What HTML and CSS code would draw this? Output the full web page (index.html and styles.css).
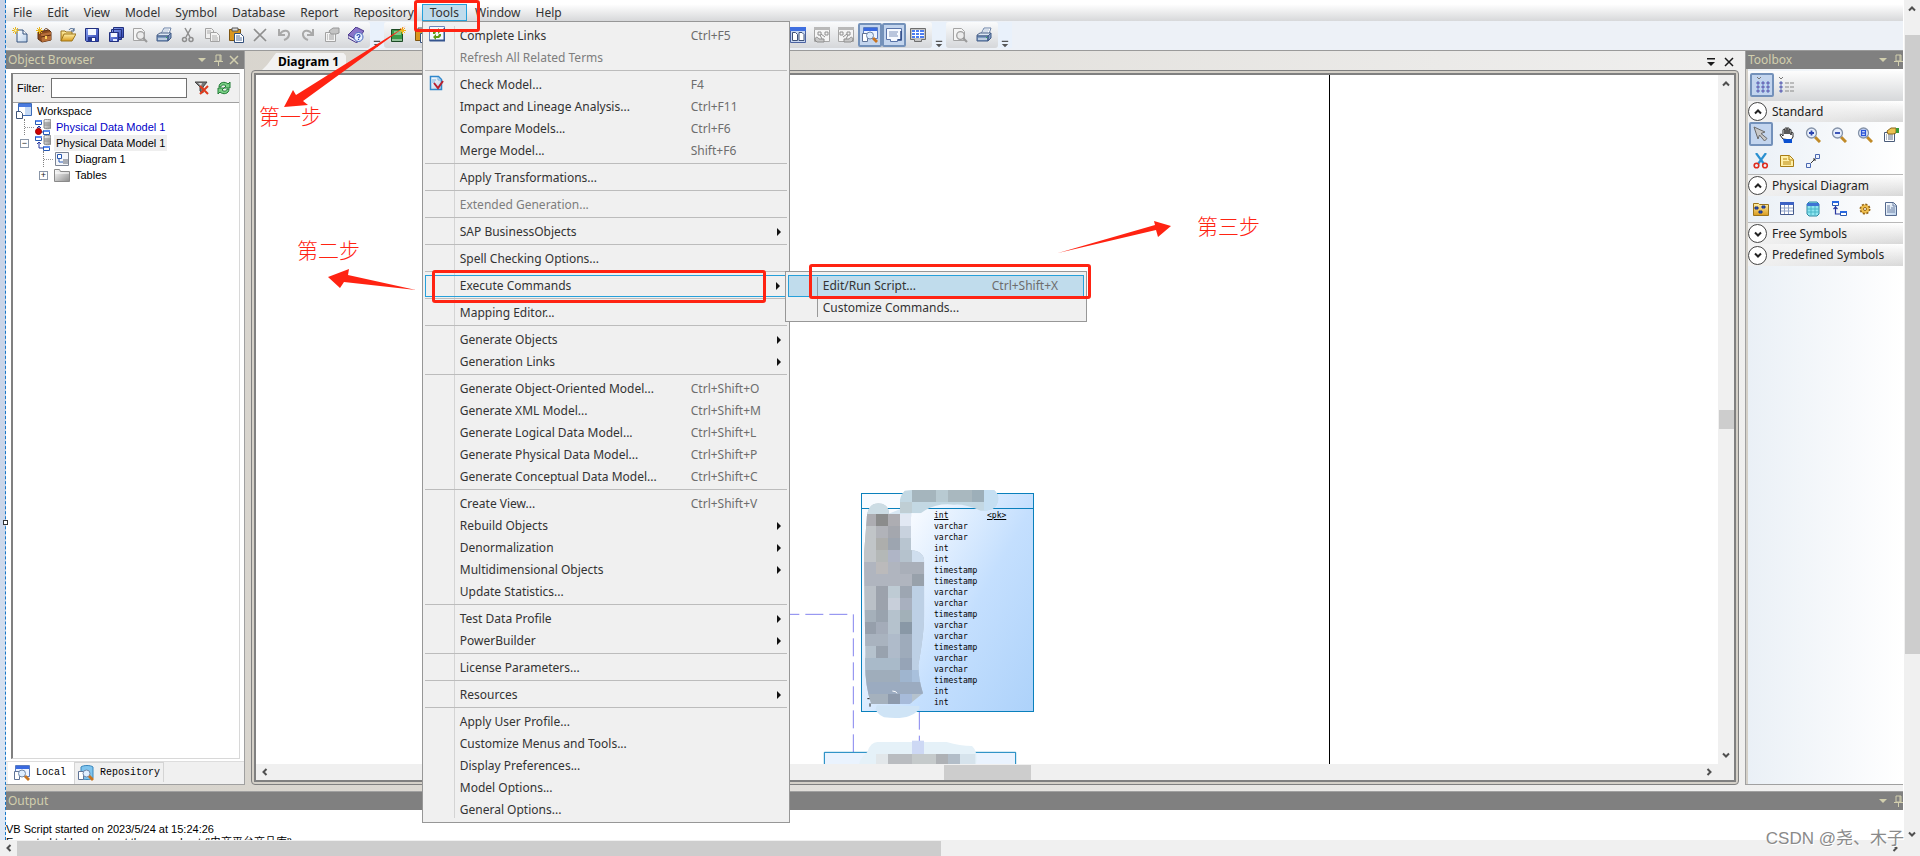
FILE: index.html
```html
<!DOCTYPE html>
<html lang="en">
<head>
<meta charset="utf-8">
<title>Physical Data Model 1 - Diagram 1</title>
<link rel="stylesheet" href="styles.css">
</head>
<body>
<svg class="defs" aria-hidden="true">
  <defs>
    <linearGradient id="gGold" x1="0" y1="0" x2="0" y2="1"><stop offset="0" stop-color="#fff0a8"/><stop offset="1" stop-color="#d99a1c"/></linearGradient>
    <linearGradient id="gBlue" x1="0" y1="0" x2="1" y2="1"><stop offset="0" stop-color="#8ea6f2"/><stop offset="1" stop-color="#2a3fae"/></linearGradient>
    <linearGradient id="gPaper" x1="0" y1="0" x2="1" y2="1"><stop offset="0" stop-color="#ffffff"/><stop offset="1" stop-color="#b9d0ea"/></linearGradient>
    <linearGradient id="gGrey" x1="0" y1="0" x2="1" y2="1"><stop offset="0" stop-color="#ffffff"/><stop offset="1" stop-color="#8d8d8d"/></linearGradient>
  </defs>
  <symbol id="i-new" viewBox="0 0 16 16"><path d="M5 3h6l4 4v8H5z" fill="url(#gPaper)" stroke="#33507c"/><path d="M11 3v4h4" fill="#fff" stroke="#33507c"/><path d="M3.500 0v7M0 3.500h7M1 1l5 5M6 1L1 6" stroke="#e8b51a"/><path d="M2.500 3.500h2" stroke="#fff8b0" stroke-width="2"/></symbol>
  <symbol id="i-case" viewBox="0 0 16 16"><path d="M2 5l11-2 2 2v8l-9 2-4-3z" fill="#8a4a20" stroke="#5d2e10"/><path d="M5 7l10-2v8l-9 2z" fill="#b8703a"/><path d="M5 10l10-2" stroke="#5d2e10"/><path d="M8 4c0-3 4-3 4-1" fill="none" stroke="#5d2e10"/><path d="M9 9h2v3H9z" fill="#ffd25a"/><path d="M3.500 0v7M0 3.500h7M1 1l5 5M6 1L1 6" stroke="#e8b51a"/></symbol>
  <symbol id="i-open" viewBox="0 0 16 16"><path d="M1 14V4h4l1 1h6v3" fill="url(#gGold)" stroke="#9c741a"/><path d="M1 14l3-7h12l-4 7z" fill="url(#gGold)" stroke="#9c741a"/><path d="M9 3c1-2 4-2 5 0m0-2v3h-3" fill="none" stroke="#3c5a86"/></symbol>
  <symbol id="i-save" viewBox="0 0 16 16"><path d="M1.500 1.500h13v13h-12l-1-1z" fill="url(#gBlue)" stroke="#22307e"/><path d="M4 2h8v6H4z" fill="#f4f8ff"/><path d="M4 10h8v5H4z" fill="#283a90"/><path d="M8 11h3v3H8z" fill="#fff"/></symbol>
  <symbol id="i-saveall" viewBox="0 0 16 16"><path d="M5.500.500h10v10h-10zM3.500 2.500h10v10h-10z" fill="url(#gBlue)" stroke="#22307e"/><path d="M1.500 5.500h9v9h-9z" fill="url(#gBlue)" stroke="#22307e"/><path d="M3 6h6v4H3z" fill="#f4f8ff"/><path d="M5 12h4v2H5z" fill="#dfe8ff"/></symbol>
  <symbol id="i-preview" viewBox="0 0 16 16"><path d="M1.500 1.500h8l3 3v9h-11z" fill="#f5f5f5" stroke="#a4a4a4"/><circle cx="8.500" cy="8.500" r="3.800" fill="#ececec" stroke="#a0a0a0" stroke-width="1.300"/><path d="M11 11l4 4" stroke="#9a9a9a" stroke-width="2.200"/></symbol>
  <symbol id="i-print" viewBox="0 0 16 16"><path d="M5 7l3-6h7l-2 6z" fill="#fff" stroke="#6d83a8"/><path d="M8 3h5M7 5h5" stroke="#a9bbd4"/><path d="M1 8l3-2h11l-3 3H1z" fill="#dde7f3" stroke="#51678c"/><path d="M1 9h11v5H1zM12 9l3-3v5l-3 3z" fill="#7f9cc2" stroke="#405a86"/><path d="M2 12h9" stroke="#fff"/><path d="M10 10h1v1h-1z" fill="#36b04a"/></symbol>
  <symbol id="i-cut" viewBox="0 0 16 16"><path d="M5 1l5 9M11 1L6 10" stroke="currentColor" stroke-width="1.500"/><circle cx="4.500" cy="12.500" r="2" fill="none" stroke="currentColor" stroke-width="1.500"/><circle cx="11" cy="12.500" r="2" fill="none" stroke="currentColor" stroke-width="1.500"/></symbol>
  <symbol id="i-copy" viewBox="0 0 16 16"><path d="M1.500 1.500h6l2 2v8h-8z" fill="#f0f0f0" stroke="#a2a2a2"/><path d="M6.500 5.500h6l3 3v6h-9z" fill="#f4f4f4" stroke="#a2a2a2"/><path d="M3 4h4M3 6h3M8 9h5M8 11h6M8 13h6" stroke="#adadad"/></symbol>
  <symbol id="i-paste" viewBox="0 0 16 16"><path d="M1.500 2.500h11v11h-11z" fill="#d9961e" stroke="#7e5510"/><path d="M4 1h6v3H4z" fill="#dfdfdf" stroke="#555"/><path d="M6.500 6.500h6l3 3v6h-9z" fill="#fff" stroke="#33507c"/><path d="M8 9h4M8 11h6M8 13h6" stroke="#53709e"/></symbol>
  <symbol id="i-x" viewBox="0 0 16 16"><path d="M2 2l12 12M14 2L2 14" stroke="currentColor" stroke-width="1.700"/></symbol>
  <symbol id="i-undo" viewBox="0 0 16 16"><path d="M3 2v6h6" fill="none" stroke="#a9a9a9" stroke-width="2"/><path d="M4 7c3-5 10-4 9 1-.5 3-2 4-5 5" fill="none" stroke="#a9a9a9" stroke-width="2"/></symbol>
  <symbol id="i-props" viewBox="0 0 16 16"><path d="M1.500 5.500h10v9h-10z" fill="#f4f4f4" stroke="#a2a2a2"/><path d="M3 8h1m1 0h5M3 10h1m1 0h5M3 12h1m1 0h5" stroke="#9d9d9d"/><path d="M5 4l4-3h6v5l-3 1-5 0z" fill="#c4c4c4" stroke="#989898"/></symbol>
  <symbol id="i-propscolor" viewBox="0 0 16 16"><path d="M1.500 5.500h10v9h-10z" fill="#fff" stroke="#4a5c7a"/><path d="M3 8h1m1 0h5M3 10h1m1 0h5M3 12h1m1 0h5" stroke="#62728c"/><path d="M4 4l4-3h5v5l-3 1-5 0z" fill="#ecc252" stroke="#8c6a1c"/><path d="M13 1h3v5h-3z" fill="#3b9a3a"/></symbol>
  <symbol id="i-book" viewBox="0 0 16 16"><path d="M0 8l8-8 8 4-7 9z" fill="#8a74c8" stroke="#4b3a8c"/><path d="M0 8v3l9 5v-3z" fill="#e6e2f6" stroke="#4b3a8c"/><circle cx="10.500" cy="10" r="4.500" fill="#e8f0ff" stroke="#4a6ac0"/><path d="M9 9c0-2 3-2 3 0 0 1-1.500 1-1.500 2.200M10.500 12v1" fill="none" stroke="#2a4cb0" stroke-width="1.200"/></symbol>
  <symbol id="i-green" viewBox="0 0 16 16"><path d="M1.500 2.500h11v12h-11z" fill="#3a9a48" stroke="#1c4a24"/><path d="M4 4h7v4H4z" fill="#7fc689"/><path d="M2 13h10" stroke="#e8e8e8"/><path d="M12.500 0v7M9 3.500h7M10 1l5 5M15 1l-5 5" stroke="#efb81a"/></symbol>
  <symbol id="i-win" viewBox="0 0 16 16"><path d="M.500.500h15v15H.500z" fill="#c9d8f2" stroke="#4a62a0"/><path d="M0 0h16v4H0z" fill="#3f6fe0"/><path d="M2.500 5.500h3l2 2v6h-5zM9 5.500h3l2 2v6H9z" fill="#fff" stroke="#3d5078"/></symbol>
  <symbol id="i-net" viewBox="0 0 16 16"><path d="M.500.500h15v14H.500z" fill="#f5f5f5" stroke="#a6a6a6"/><path d="M0 0h16v3H0z" fill="#b9b9b9"/><path d="M4 5h3v3H4zM11 5h3v3h-3zM7 7l4 3M6 8l2 4" fill="none" stroke="#8e8e8e"/><path d="M1 13c0-4 3-3 4-1h5v3H3z" fill="#c8c8c8" stroke="#8e8e8e"/></symbol>
  <symbol id="i-find" viewBox="0 0 16 16"><path d="M1.500.500h14v11h-14z" fill="#eef4ff" stroke="#5a7cc0"/><path d="M2 1h13v3H2z" fill="#3a6ae0"/><path d="M.500 6.500h5v8h-5z" fill="#fff" stroke="#5f7396"/><circle cx="8" cy="8.500" r="3.500" fill="#dfeeff" stroke="#6f86a8"/><path d="M11 11l4 4" stroke="#c87420" stroke-width="2.800"/></symbol>
  <symbol id="i-repo" viewBox="0 0 16 16"><path d="M3 2c2-2 10-2 12 0v11c-2 2-10 2-12 0z" fill="#7fc4ee" stroke="#3a86bc"/><path d="M.500 6.500h5v8h-5z" fill="#fff" stroke="#5f7396"/><circle cx="8.500" cy="8.500" r="3.500" fill="#dfeeff" stroke="#6f86a8"/><path d="M11 11l4 4" stroke="#c87420" stroke-width="2.800"/></symbol>
  <symbol id="i-note" viewBox="0 0 16 16"><path d="M.500 1.500h15v11h-4v2h-7v-2h-4z" fill="#f6faff" stroke="#5a74a8"/><path d="M3 5h9M3 7h8M3 9h9" stroke="#7c92ba"/><path d="M12 13h3V4" fill="none" stroke="#2d4a86" stroke-width="1.500"/></symbol>
  <symbol id="i-grid" viewBox="0 0 16 16"><path d="M.500 1.500h15v11h-4v2h-7v-2h-4z" fill="#c4c4c4" stroke="#6e6e6e"/><path d="M2 3h12v8H2z" fill="#4d7df0"/><path d="M2 5.500h12M2 8.500h12M5.500 3v8M9.500 3v8" stroke="#fff"/></symbol>
  <symbol id="i-links" viewBox="0 0 16 16"><path d="M.500.500h15v14H.500z" fill="#f4f8ff" stroke="#6a86b8"/><path d="M.500 14.500h15V2" fill="none" stroke="#35558f" stroke-width="2"/><path d="M4 8V6l2-2h3V2l3 3-3 3V6H7L6 8zM12 8v2l-2 2H7v2l-3-3 3-3v2h2l1-2z" fill="#5f9a14"/></symbol>
  <symbol id="i-check" viewBox="0 0 16 16"><path d="M1.500 1.500h8l3 3v10h-11z" fill="url(#gPaper)" stroke="#2f87cc" stroke-width="1.500"/><path d="M9 2v3h3M3 5h4M3 7h3" fill="none" stroke="#79b4e0"/><path d="M5 8l4 5 5-7" fill="none" stroke="#b8202e" stroke-width="2"/></symbol>
  <symbol id="i-filter" viewBox="0 0 16 16"><path d="M1 2h12L9 7v6l-3-2V7z" fill="#787878" stroke="#444"/><path d="M4 3h4l-1 3" fill="#ddd"/><path d="M6 6l8 8M14 6l-8 8" stroke="#e03a1c" stroke-width="2"/></symbol>
  <symbol id="i-refresh" viewBox="0 0 16 16"><path d="M3 7c0-5 6-6 9-3l2-2v6H8l2-2c-2-2-5-1-5 1zM13 9c0 5-6 6-9 3l-2 2V8h6l-2 2c2 2 5 1 5-1z" fill="#7ad086" stroke="#1f7a34"/></symbol>
  <symbol id="i-work" viewBox="0 0 16 16"><path d="M2.500.500h13v12h-13z" fill="#fff" stroke="#3a6ab8"/><path d="M3 1h12v3H3z" fill="#4a7ae0"/><path d="M9 4h6v8H9z" fill="#c5daf5"/><path d="M.500 8.500h4l2 2v5h-6z" fill="#fff" stroke="#3f5478"/></symbol>
  <symbol id="i-pdm" viewBox="0 0 16 16"><path d="M9 1c1-1 6-1 7 0v8c-1 1-6 1-7 0z" fill="url(#gGrey)" stroke="#888"/><path d="M9 4h7M9 6h7" stroke="#888"/><path d="M.500 1.500h6v4h-6zM8.500 11.500h6v4h-6z" fill="#fff" stroke="#2858b0"/><path d="M1 2h6M9 12h6" stroke="#5a8af0" stroke-width="2"/><path d="M4 13V7M2 9l2-2 2 2M4 13h4" fill="none" stroke="#2838a0"/></symbol>
  <symbol id="i-pdmred" viewBox="0 0 16 16"><use href="#i-pdm"/><circle cx="3.500" cy="12.500" r="3" fill="#d00000" stroke="#900"/></symbol>
  <symbol id="i-diag" viewBox="0 0 16 16"><path d="M1.500 1.500h13v13h-13z" fill="#f4f6fa" stroke="#7c8494"/><path d="M3.500 3.500h4v4h-4zM5 8v3h4" fill="#fff" stroke="#2858b0"/><path d="M9 8h5v5H9z" fill="#a8acb4"/></symbol>
  <symbol id="i-folder" viewBox="0 0 16 16"><path d="M.500 14.500v-12h5l1 2h9v10z" fill="url(#gGrey)" stroke="#8a8a8a"/><path d="M1 6h14" stroke="#fff"/></symbol>
  <symbol id="i-thumbs" viewBox="0 0 16 16"><path d="M3 0l2 2 2-2" fill="none" stroke="#777"/><path d="M3 5h2v2H3zM8 5h2v2H8zM13 5h2v2h-2zM3 9h2v2H3zM8 9h2v2H8zM13 9h2v2h-2zM3 13h2v2H3zM8 13h2v2H8zM13 13h2v2h-2z" fill="#e070a0" stroke="#5070c0"/></symbol>
  <symbol id="i-list" viewBox="0 0 16 16"><path d="M0 0l2 2 2-2" fill="none" stroke="#777"/><path d="M1 5h2v2H1zM1 9h2v2H1zM1 13h2v2H1z" fill="#e070a0" stroke="#5070c0"/><path d="M6 6h4m1 0h4M6 10h4m1 0h4M6 14h4m1 0h4" stroke="#888"/></symbol>
  <symbol id="i-arrow" viewBox="0 0 16 16"><path d="M1 1l11 5-4 1.500 6 5-2.500 2.500-5-6L5 13z" fill="#c8c8c8" stroke="#6a6a6a"/></symbol>
  <symbol id="i-hand" viewBox="0 0 16 16"><path d="M4 12L1 8c0-1 1.500-1.500 3 1V3c0-1 2-1 2 0v4V1.500c0-1 2-1 2 0V7 1.500c0-1 2-1 2 0V7 3c0-1 2-1 2 0v5-2c0-1 2-1 2 0v4l-2 3z" fill="#fff" stroke="#222"/><path d="M4 12h9v4H5z" fill="#0a50d0"/></symbol>
  <symbol id="i-zin" viewBox="0 0 16 16"><path d="M10 10l5 5" stroke="#c08a28" stroke-width="3"/><circle cx="6.500" cy="6" r="5" fill="#e6eefc" stroke="#8492a8" stroke-width="1.300"/><path d="M4 6h5M6.500 3.500v5" stroke="#2a44b0" stroke-width="1.800"/></symbol>
  <symbol id="i-zout" viewBox="0 0 16 16"><path d="M10 10l5 5" stroke="#c08a28" stroke-width="3"/><circle cx="6.500" cy="6" r="5" fill="#e6eefc" stroke="#8492a8" stroke-width="1.300"/><path d="M4 6h5" stroke="#2a44b0" stroke-width="1.800"/></symbol>
  <symbol id="i-zfit" viewBox="0 0 16 16"><path d="M10 10l5 5" stroke="#c08a28" stroke-width="3"/><circle cx="6.500" cy="6" r="5" fill="#e6eefc" stroke="#8492a8" stroke-width="1.300"/><path d="M4.500 3.500h4v5h-4zM4 6h5" fill="#fff" stroke="#2a54d8" stroke-width="1.300"/></symbol>
  <symbol id="i-scis" viewBox="0 0 16 16"><path d="M3 0l8 11M13 0L5 11" stroke="#2a90d0" stroke-width="2.200"/><circle cx="3.500" cy="12.500" r="2.300" fill="none" stroke="#e02c1c" stroke-width="1.600"/><circle cx="12" cy="12.500" r="2.300" fill="none" stroke="#e02c1c" stroke-width="1.600"/></symbol>
  <symbol id="i-memo" viewBox="0 0 16 16"><path d="M1.500 2.500h9l4 4v7h-13z" fill="#fff0a8" stroke="#a87c14"/><path d="M10 2.500V7h4M4 6h4M4 9h8M4 11h8" fill="none" stroke="#b8860b"/></symbol>
  <symbol id="i-link" viewBox="0 0 16 16"><path d="M1.500 10.500h4v4h-4zM10.500 1.500h4v4h-4z" fill="#eef4ff" stroke="#4a68b0"/><path d="M6 10l4-4M8 6h2v2" fill="none" stroke="#333"/></symbol>
  <symbol id="i-pkg" viewBox="0 0 16 16"><path d="M.500 14.500v-12h5l1 1h9v11z" fill="url(#gGold)" stroke="#9c741a"/><path d="M2 6h3v2H2zM9 5h3v2H9zM6 10h3v2H6z" fill="#3058c8" stroke="#183080"/></symbol>
  <symbol id="i-table" viewBox="0 0 16 16"><path d="M1.500 1.500h13v12h-13z" fill="#fff" stroke="#43598c"/><path d="M1 1h14v3H1z" fill="#3d62c4"/><path d="M2 7h12M2 10h12M5.500 4v9M9.500 4v9" stroke="#8fa2c8"/></symbol>
  <symbol id="i-view" viewBox="0 0 16 16"><path d="M2 3l2-2h8l2 2v10l-2 2H4l-2-2z" fill="#8fe6f0" stroke="#2c86a0"/><path d="M2 2h12v3H2z" fill="#3d74d4"/><path d="M2 8h12M2 11h12M6 5v9M10 5v9" stroke="#48b6c8"/></symbol>
  <symbol id="i-ref" viewBox="0 0 16 16"><path d="M1.500.500h6v4h-6zM9.500 10.500h6v4h-6z" fill="#fff" stroke="#2858b0"/><path d="M1 1h7M9 11h7" stroke="#2868e0" stroke-width="2"/><path d="M4.500 5v8H9M2.500 8l2-2 2 2" fill="none" stroke="#2838a0" stroke-width="1.200"/></symbol>
  <symbol id="i-gear" viewBox="0 0 16 16"><circle cx="8" cy="8" r="4.500" fill="#e0a830" stroke="#946414" stroke-width="2" stroke-dasharray="2 1.500"/><circle cx="8" cy="8" r="3.800" fill="#f0c050"/><circle cx="8" cy="8" r="1.500" fill="#fff" stroke="#946414"/></symbol>
  <symbol id="i-file" viewBox="0 0 16 16"><path d="M2.500 1.500h8l3 3v10h-11z" fill="url(#gPaper)" stroke="#54698e"/><path d="M10 2v3h3M4 5h3M4 7h3M8 7h4M4 9h8M4 11h8" fill="none" stroke="#6e82a6"/></symbol>
  <symbol id="i-pin" viewBox="0 0 10 12"><path d="M3 1h5v6H3zM1 7.500h9M5.500 8v4M7 1v6" fill="none" stroke="currentColor"/></symbol>
  <symbol id="i-close" viewBox="0 0 10 10"><path d="M1 1l8 8M9 1L1 9" stroke="currentColor" stroke-width="1.500"/></symbol>
  <symbol id="i-drop" viewBox="0 0 10 6"><path d="M1 1h8L5 5z" fill="currentColor"/></symbol>
  <symbol id="i-menu" viewBox="0 0 10 10"><path d="M1 1h8v1.500H1zM1 5h8L5 9z" fill="currentColor"/></symbol>
  <symbol id="i-up" viewBox="0 0 8 8"><path d="M1 5.500L4 2.500l3 3" fill="none" stroke="currentColor" stroke-width="2"/></symbol>
  <symbol id="i-down" viewBox="0 0 8 8"><path d="M1 2.500l3 3 3-3" fill="none" stroke="currentColor" stroke-width="2"/></symbol>
  <symbol id="i-left" viewBox="0 0 8 8"><path d="M5.500 1L2.500 4l3 3" fill="none" stroke="currentColor" stroke-width="2"/></symbol>
  <symbol id="i-right" viewBox="0 0 8 8"><path d="M2.500 1l3 3-3 3" fill="none" stroke="currentColor" stroke-width="2"/></symbol>
</svg>

<div class="page">
  <div class="edge"><span class="handle"></span></div>

  <div class="app">
    <nav class="menubar">
      <button>File</button><button>Edit</button><button>View</button><button>Model</button><button>Symbol</button><button>Database</button><button>Report</button><button>Repository</button>
      <div class="menu-host">
        <button class="open">Tools</button>
        <ul class="menu">
          <li><svg class="ico"><use href="#i-links"/></svg><button>Complete Links</button><kbd>Ctrl+F5</kbd></li>
          <li class="off"><button disabled>Refresh All Related Terms</button></li>
          <li class="sep"></li>
          <li><svg class="ico"><use href="#i-check"/></svg><button>Check Model...</button><kbd>F4</kbd></li>
          <li><button>Impact and Lineage Analysis...</button><kbd>Ctrl+F11</kbd></li>
          <li><button>Compare Models...</button><kbd>Ctrl+F6</kbd></li>
          <li><button>Merge Model...</button><kbd>Shift+F6</kbd></li>
          <li class="sep"></li>
          <li><button>Apply Transformations...</button></li>
          <li class="sep"></li>
          <li class="off"><button disabled>Extended Generation...</button></li>
          <li class="sep"></li>
          <li class="more"><button>SAP BusinessObjects</button></li>
          <li class="sep"></li>
          <li><button>Spell Checking Options...</button></li>
          <li class="sep"></li>
          <li class="more current"><button>Execute Commands</button>
            <ul class="menu submenu">
              <li class="hot"><button>Edit/Run Script...</button><kbd>Ctrl+Shift+X</kbd></li>
              <li><button>Customize Commands...</button></li>
            </ul>
          </li>
          <li class="sep"></li>
          <li><button>Mapping Editor...</button></li>
          <li class="sep"></li>
          <li class="more"><button>Generate Objects</button></li>
          <li class="more"><button>Generation Links</button></li>
          <li class="sep"></li>
          <li><button>Generate Object-Oriented Model...</button><kbd>Ctrl+Shift+O</kbd></li>
          <li><button>Generate XML Model...</button><kbd>Ctrl+Shift+M</kbd></li>
          <li><button>Generate Logical Data Model...</button><kbd>Ctrl+Shift+L</kbd></li>
          <li><button>Generate Physical Data Model...</button><kbd>Ctrl+Shift+P</kbd></li>
          <li><button>Generate Conceptual Data Model...</button><kbd>Ctrl+Shift+C</kbd></li>
          <li class="sep"></li>
          <li><button>Create View...</button><kbd>Ctrl+Shift+V</kbd></li>
          <li class="more"><button>Rebuild Objects</button></li>
          <li class="more"><button>Denormalization</button></li>
          <li class="more"><button>Multidimensional Objects</button></li>
          <li><button>Update Statistics...</button></li>
          <li class="sep"></li>
          <li class="more"><button>Test Data Profile</button></li>
          <li class="more"><button>PowerBuilder</button></li>
          <li class="sep"></li>
          <li><button>License Parameters...</button></li>
          <li class="sep"></li>
          <li class="more"><button>Resources</button></li>
          <li class="sep"></li>
          <li><button>Apply User Profile...</button></li>
          <li><button>Customize Menus and Tools...</button></li>
          <li><button>Display Preferences...</button></li>
          <li><button>Model Options...</button></li>
          <li><button>General Options...</button></li>
        </ul>
      </div>
      <button>Window</button><button>Help</button>
    </nav>

    <div class="toolbars">
      <div class="bar">
        <button aria-label="New"><svg class="ico"><use href="#i-new"/></svg></button>
        <button aria-label="New project"><svg class="ico"><use href="#i-case"/></svg></button>
        <button aria-label="Open"><svg class="ico"><use href="#i-open"/></svg></button>
        <button aria-label="Save"><svg class="ico"><use href="#i-save"/></svg></button>
        <button aria-label="Save all"><svg class="ico"><use href="#i-saveall"/></svg></button>
        <button aria-label="Preview"><svg class="ico"><use href="#i-preview"/></svg></button>
        <button aria-label="Print"><svg class="ico"><use href="#i-print"/></svg></button>
        <button aria-label="Cut"><svg class="ico grey"><use href="#i-cut"/></svg></button>
        <button aria-label="Copy"><svg class="ico"><use href="#i-copy"/></svg></button>
        <button aria-label="Paste"><svg class="ico"><use href="#i-paste"/></svg></button>
        <button aria-label="Delete"><svg class="ico grey"><use href="#i-x"/></svg></button>
        <button aria-label="Undo"><svg class="ico"><use href="#i-undo"/></svg></button>
        <button aria-label="Redo"><svg class="ico flip"><use href="#i-undo"/></svg></button>
        <button aria-label="Properties"><svg class="ico"><use href="#i-props"/></svg></button>
        <button aria-label="Help"><svg class="ico"><use href="#i-book"/></svg></button>
      </div>
      <button class="overflow" aria-label="More"><svg><use href="#i-menu"/></svg></button>
      <div class="bar wide">
        <div class="tools">
          <button aria-label="New model"><svg class="ico"><use href="#i-green"/></svg></button>
          <button aria-label="Paste as"><svg class="ico"><use href="#i-paste"/></svg></button>
        </div>
        <div class="tools">
          <button aria-label="Tile"><svg class="ico"><use href="#i-win"/></svg></button>
          <button aria-label="Show in"><svg class="ico"><use href="#i-net"/></svg></button>
          <button aria-label="Show out"><svg class="ico flip"><use href="#i-net"/></svg></button>
          <button class="on" aria-label="Browser"><svg class="ico"><use href="#i-find"/></svg></button>
          <button class="on" aria-label="Output"><svg class="ico"><use href="#i-note"/></svg></button>
          <button aria-label="Result list"><svg class="ico"><use href="#i-grid"/></svg></button>
        </div>
      </div>
      <button class="overflow" aria-label="More"><svg><use href="#i-menu"/></svg></button>
      <div class="bar">
        <button aria-label="Preview"><svg class="ico"><use href="#i-preview"/></svg></button>
        <button aria-label="Print"><svg class="ico"><use href="#i-print"/></svg></button>
      </div>
      <button class="overflow" aria-label="More"><svg><use href="#i-menu"/></svg></button>
    </div>

    <main class="work">
      <aside class="browser">
        <header class="caption"><h2>Object Browser</h2><svg class="drop"><use href="#i-drop"/></svg><svg class="pin"><use href="#i-pin"/></svg><svg class="close"><use href="#i-close"/></svg></header>
        <div class="browser-body">
          <div class="sunken">
            <div class="filter">
              <label for="filter">Filter:</label><input id="filter" type="text">
              <button aria-label="Clear filter"><svg class="ico"><use href="#i-filter"/></svg></button>
              <button aria-label="Refresh"><svg class="ico"><use href="#i-refresh"/></svg></button>
            </div>
            <ul class="tree">
              <li><svg class="ico"><use href="#i-work"/></svg><span>Workspace</span></li>
              <li class="l1"><i class="stem"></i><svg class="ico"><use href="#i-pdmred"/></svg><span class="blue">Physical Data Model 1</span></li>
              <li class="l1"><i class="box">−</i><svg class="ico"><use href="#i-pdm"/></svg><span class="sel">Physical Data Model 1</span></li>
              <li class="l2"><i class="stem"></i><svg class="ico"><use href="#i-diag"/></svg><span>Diagram 1</span></li>
              <li class="l2"><i class="box">+</i><svg class="ico"><use href="#i-folder"/></svg><span>Tables</span></li>
            </ul>
          </div>
        </div>
        <div class="tabs"><button class="sel"><svg class="ico"><use href="#i-find"/></svg>Local</button><button><svg class="ico"><use href="#i-repo"/></svg>Repository</button></div>
      </aside>

      <section class="document">
        <div class="doc-tabs"><button class="doc-tab">Diagram 1</button><svg class="dm"><use href="#i-menu"/></svg><svg class="dx"><use href="#i-close"/></svg></div>
        <div class="frame">
          <div class="sheet">
            <div class="canvas">
              <i class="page-break"></i>
              <svg class="art" viewBox="0 0 840 882">
                <g fill="none" stroke="#8484ee" stroke-width="3"><path d="M30 433h190" stroke-dasharray="54 18" stroke-dashoffset="26"/><path d="M220 433v413M418 725v90" stroke-dasharray="54 18"/></g>
                <path d="M133 882v-35h574v35" fill="#eaf3fe" stroke="#0a80bc" stroke-width="3"/>
              </svg>
              <div class="entity">
                <div class="entity-name"></div>
                <table>
                  <tr><td></td><td><u>int</u></td><td><u>&lt;pk&gt;</u></td></tr>
                  <tr><td></td><td>varchar</td><td></td></tr>
                  <tr><td></td><td>varchar</td><td></td></tr>
                  <tr><td></td><td>int</td><td></td></tr>
                  <tr><td></td><td>int</td><td></td></tr>
                  <tr><td></td><td>timestamp</td><td></td></tr>
                  <tr><td></td><td>timestamp</td><td></td></tr>
                  <tr><td></td><td>varchar</td><td></td></tr>
                  <tr><td></td><td>varchar</td><td></td></tr>
                  <tr><td></td><td>timestamp</td><td></td></tr>
                  <tr><td></td><td>varchar</td><td></td></tr>
                  <tr><td></td><td>varchar</td><td></td></tr>
                  <tr><td></td><td>timestamp</td><td></td></tr>
                  <tr><td></td><td>varchar</td><td></td></tr>
                  <tr><td></td><td>varchar</td><td></td></tr>
                  <tr><td></td><td>timestamp</td><td></td></tr>
                  <tr><td></td><td>int</td><td></td></tr>
                  <tr><td></td><td>int</td><td></td></tr>
                </table>
              </div>
              <svg class="art" viewBox="0 0 840 882">
                <defs>
                  <clipPath id="blobA"><path d="M260 150q0-48 35-50 32 2 32 32h66v108q40 4 40 36v150q0 60-18 160 0 40 14 84l-40 32H274q-22-60-18-150l-4-300z"/></clipPath>
                  <clipPath id="blobB"><path d="M374 62q16-2 22-2h246q20 18 10 40-8 24-50 22-50-22-80-18-60-6-100 26h-62q-8-46 14-68z"/></clipPath>
                </defs>
                <path d="M290 706q-10 20 22 36 50 6 76-4 34-14 30-30z" fill="#cfe4f6"/>
                <path d="M324 132l50-20 20 8v20h-70z" fill="#d8e8f4"/>
                <path d="M262 686h8M270 700v10" stroke="#222" stroke-width="3"/>
                <g clip-path="url(#blobA)">
                  <rect x="250" y="98" width="186" height="612" fill="#b5c2cd"/>
                  <rect x="250" y="98" width="80" height="34" fill="#ccdce4"/>
                  <g fill="#adadb2"><path d="M252 132h36v36h-36zM324 132h36v36h-36z"/></g>
                  <path d="M288 132h36v36h-36z" fill="#8b8c8c"/>
                  <path d="M360 132h72v36h-72z" fill="#e1e8f3"/>
                  <path d="M252 168h36v108h-36z" fill="#c1c5c8"/><path d="M288 168h36v36h-36z" fill="#b1b3b9"/><path d="M324 168h36v36h-36z" fill="#a4a7ae"/><path d="M360 168h36v36h-36z" fill="#c8d2de"/>
                  <path d="M288 204h36v36h-36z" fill="#adaeac"/><path d="M324 204h36v36h-36z" fill="#9da5b0"/><path d="M360 204h36v36h-36z" fill="#b8c5d0"/>
                  <path d="M288 240h36v36h-36z" fill="#b4b8b7"/><path d="M324 240h36v36h-36z" fill="#afb5c6"/><path d="M396 240h36v36h-36z" fill="#cfdeee"/>
                  <path d="M252 276h180v72H252z" fill="#b0b5bf"/><path d="M288 276h36v36h-36z" fill="#bbbabb"/><path d="M360 276h72v36h-72z" fill="#a9afb9"/><path d="M396 312h36v36h-36z" fill="#98a1ab"/>
                  <path d="M252 348h36v72h-36z" fill="#bac0c7"/><path d="M288 348h36v72h-36z" fill="#9ca2ac"/><path d="M324 348h36v36h-36z" fill="#becbd4"/><path d="M324 384h36v36h-36z" fill="#c8cfda"/><path d="M360 348h36v36h-36z" fill="#9da6b2"/><path d="M360 384h36v36h-36z" fill="#a8b0bf"/><path d="M396 348h36v252h-36z" fill="#bdd0e5"/>
                  <path d="M252 420h36v36h-36z" fill="#a5b0ba"/><path d="M288 420h36v36h-36z" fill="#99a3ae"/><path d="M360 420h36v36h-36z" fill="#a2b0b8"/>
                  <path d="M252 456h36v36h-36z" fill="#969fab"/><path d="M288 456h36v36h-36z" fill="#a4acb9"/><path d="M360 456h36v36h-36z" fill="#8998a6"/>
                  <path d="M252 492h72v36h-72z" fill="#a9b3bf"/><path d="M360 492h36v72h-36z" fill="#9eabbb"/><path d="M288 528h36v36h-36z" fill="#98a2ae"/><path d="M324 492h36v72h-36z" fill="#afbbca"/>
                  <path d="M252 564h108v36H252z" fill="#a9bac9"/><path d="M360 564h36v36h-36z" fill="#96a4b7"/>
                  <path d="M252 600h108v36H252z" fill="#9fadbb"/><path d="M360 600h36v36h-36z" fill="#9fb5cf"/><path d="M396 600h36v36h-36z" fill="#a8c0dc"/>
                  <path d="M252 636h180v36H252z" fill="#9babc0"/>
                  <path d="M252 672h72v36h-72z" fill="#a5b1bd"/><path d="M324 672h36v36h-36z" fill="#8d9aac"/><path d="M360 672h36v36h-36z" fill="#a7bbda"/>
                </g>
                <path d="M337 663l10 2 4 5" fill="none" stroke="#fff" stroke-width="3"/>
                <g clip-path="url(#blobB)">
                  <rect x="360" y="58" width="296" height="76" fill="#c3d8e3"/>
                  <path d="M396 60h72v36h-72z" fill="#a5b5bd"/><path d="M468 60h36v36h-36z" fill="#b8cad2"/><path d="M504 60h72v36h-72z" fill="#a9b8bf"/><path d="M576 60h36v36h-36z" fill="#9dafb9"/><path d="M612 60h46v66h-46z" fill="#c5dff2"/><path d="M360 96h36v36h-36z" fill="#bfced4"/>
                </g>
                <path d="M262 846q10-30 30-30h208q40 12 76 12 20 20 12 56l-80 4-20 8-250-8q-4-16 24-42z" fill="#e5f1f8"/>
                <path d="M396 812h36v40h-36z" fill="#cdd8f4"/>
                <path d="M324 852h72v30h-72z" fill="#b9bcc0"/><path d="M396 852h72v30h-72z" fill="#c5cacb"/><path d="M468 852h36v30h-36z" fill="#aeb1b5"/><path d="M504 852h36v30h-36z" fill="#b2bdc8"/><path d="M288 852h36v30h-36z" fill="#e2e7ea"/><path d="M540 852h46v30h-46z" fill="#d6e3ec"/>
              </svg>
            </div>
            <div class="vbar inner"><svg><use href="#i-up"/></svg><i class="thumb"></i><svg><use href="#i-down"/></svg></div>
            <div class="hbar inner"><svg><use href="#i-left"/></svg><i class="thumb"></i><svg><use href="#i-right"/></svg></div>
          </div>
        </div>
      </section>

      <aside class="toolbox">
        <header class="caption"><h2>Toolbox</h2><svg class="drop"><use href="#i-drop"/></svg><svg class="pin"><use href="#i-pin"/></svg></header>
        <div class="toolbox-body">
          <div class="views"><button class="on" aria-label="Icons"><svg class="ico"><use href="#i-thumbs"/></svg></button><button aria-label="List"><svg class="ico"><use href="#i-list"/></svg></button></div>
          <button class="group first"><i><svg><use href="#i-up"/></svg></i>Standard</button>
          <div class="palette">
            <button class="on" aria-label="Pointer"><svg class="ico"><use href="#i-arrow"/></svg></button><button aria-label="Grabber"><svg class="ico"><use href="#i-hand"/></svg></button><button aria-label="Zoom in"><svg class="ico"><use href="#i-zin"/></svg></button><button aria-label="Zoom out"><svg class="ico"><use href="#i-zout"/></svg></button><button aria-label="Zoom fit"><svg class="ico"><use href="#i-zfit"/></svg></button><button aria-label="Properties"><svg class="ico"><use href="#i-propscolor"/></svg></button><button aria-label="Delete"><svg class="ico"><use href="#i-scis"/></svg></button><button aria-label="Note"><svg class="ico"><use href="#i-memo"/></svg></button><button aria-label="Link"><svg class="ico"><use href="#i-link"/></svg></button>
          </div>
          <button class="group ruled"><i><svg><use href="#i-up"/></svg></i>Physical Diagram</button>
          <div class="palette">
            <button aria-label="Package"><svg class="ico"><use href="#i-pkg"/></svg></button><button aria-label="Table"><svg class="ico"><use href="#i-table"/></svg></button><button aria-label="View"><svg class="ico"><use href="#i-view"/></svg></button><button aria-label="Reference"><svg class="ico"><use href="#i-ref"/></svg></button><button aria-label="Procedure"><svg class="ico"><use href="#i-gear"/></svg></button><button aria-label="File"><svg class="ico"><use href="#i-file"/></svg></button>
          </div>
          <button class="group ruled"><i><svg><use href="#i-down"/></svg></i>Free Symbols</button>
          <button class="group"><i><svg><use href="#i-down"/></svg></i>Predefined Symbols</button>
        </div>
      </aside>
    </main>

    <section class="output">
      <header class="caption"><h2>Output</h2><svg class="drop"><use href="#i-drop"/></svg><svg class="pin"><use href="#i-pin"/></svg></header>
      <div class="log"><p>VB Script started on 2023/5/24 at 15:24:26</p><p>Executed table and creat the named out ('电商平台商品库')</p></div>
    </section>
  </div>

  <div class="vbar outer"><svg><use href="#i-up"/></svg><i class="thumb"></i><svg><use href="#i-down"/></svg></div>
  <div class="hbar outer"><svg><use href="#i-left"/></svg><i class="thumb"></i><svg><use href="#i-right"/></svg></div>

  <div class="marks">
    <svg><g fill="#ff2312"><path d="M406 26L303 101l5 4-24 2 9-17 3 5z"/><path d="M416 290l-72-8-4 6-12-11 21-8-1 6z"/><path d="M1058 253l98-23 2 7 13-11-17-5 1 4z"/></g></svg>
    <i class="ring ring-tools"></i><i class="ring ring-exec"></i><i class="ring ring-script"></i>
    <span class="step step-1">第一步</span><span class="step step-2">第二步</span><span class="step step-3">第三步</span>
    <span class="credit">CSDN @尧、木子</span>
  </div>
</div>
</body>
</html>
```
FILE: styles.css
```css
* { box-sizing: border-box; }
body { margin: 0; font: 12px/16px "Noto Sans", "Noto Sans CJK SC", sans-serif; color: #1a1a1a; }
button { border: 0; padding: 0; margin: 0; background: none; font: inherit; color: inherit; display: flex; align-items: center; white-space: nowrap; }
ul, p, h2 { margin: 0; padding: 0; list-style: none; font-weight: normal; }
svg { display: block; flex: none; }
i { font-style: normal; flex: none; }
.defs { position: absolute; width: 0; height: 0; }
.ico { width: 16px; height: 16px; }
.grey { color: #8e8e8e; }
.flip { transform: scaleX(-1); }

.page { position: relative; display: grid; grid-template: minmax(0, 1fr) 16px / 6px minmax(0, 1fr) 16px; height: 100vh; min-height: 840px; overflow: hidden; background: #fff; }
.edge { display: flex; align-items: center; background: linear-gradient(#c9d3e6, #cbd6e9 60%, #dfe9f6); border-right: 1px dashed #1878c8; }
.handle { width: 5px; height: 5px; margin: 204px 0 0 3px; background: #fff; border: 1px solid #333; flex: none; z-index: 1; }
.app { display: flex; flex-direction: column; min-width: 0; border-right: 1px solid #fff; }

/* menu bar */
.menubar { display: flex; gap: 1px; height: 21px; padding-top: 4px; background: linear-gradient(#fff 20%, #d7d8da); color: #333; flex: none; }
.menubar > button, .menu-host > button { height: 17px; padding: 0 7px; }
.menu-host { position: relative; }
.menu-host > .open { background: #c0dcec; border: 1px solid #26a0da; }
.menu { position: absolute; z-index: 5; top: 17px; left: 0; width: 368px; padding: 3px 2px 1px; border: 1px solid #979797; background: linear-gradient(#d4d4d4, #d4d4d4) 31px 4px / 1px calc(100% - 8px) no-repeat #f0f0f0; }
.menu li { position: relative; display: flex; align-items: center; height: 22px; padding-left: 35px; }
.menu li > button { flex: 1; }
.menu li > .ico { position: absolute; left: 4px; top: 1px; }
.menu kbd { width: 96px; font: inherit; color: #6d6d6d; }
.menu .off { color: #7d7d7d; }
.menu .off button { color: inherit; }
.menu .sep { height: 5px; padding: 0; margin: 0; background: linear-gradient(#bcbcbc, #bcbcbc) 0 1px / 100% 1px no-repeat; }
.more::after { content: ""; position: absolute; right: 6px; border: 4px solid transparent; border-left-color: #111; border-right: 0; }
.menu .current { border: 1px solid #26a0da; padding-left: 34px; }
.submenu { left: 359px; top: -5px; width: 302px; padding-bottom: 2px; background-image: linear-gradient(#999, #999); }
.submenu .hot { background: #c0dcec; box-shadow: inset 0 0 0 1px #26a0da; }
.submenu .hot::before { content: ""; position: absolute; left: 29px; top: 2px; bottom: 0; border-left: 1px solid #8a9aa4; }
.submenu kbd { width: 92px; }

/* tool bars */
.toolbars { display: flex; height: 30px; padding: 1px 0 2px; border-bottom: 1px solid #9a9a9a; background: #edf1f7; flex: none; }
.bar { display: flex; padding: 1px 2px; background: linear-gradient(#fafbfc, #d5d7da); border-radius: 3px; }
.bar button { width: 24px; height: 24px; justify-content: center; }
.bar .on, .views .on, .palette .on { background: #c3d5ee; border: 2px solid #7391ba; border-radius: 2px; }
.bar.wide { width: 548px; justify-content: space-between; }
.tools { display: flex; }
.overflow { width: 14px; align-items: flex-end; justify-content: center; color: #555; background: #e9f1fb; }
.overflow svg { width: 8px; height: 8px; }

/* panes */
.caption { display: flex; align-items: center; gap: 6px; height: 18px; padding: 0 5px 0 2px; background: #808080; color: #d2cfae; flex: none; }
.caption h2 { flex: 1; font-size: 12px; line-height: 16px; }
.drop { width: 10px; height: 6px; }
.pin { width: 10px; height: 12px; }
.close { width: 10px; height: 10px; }
.work { display: flex; flex: 1; min-height: 0; gap: 6px; padding-bottom: 6px; background: linear-gradient(90deg, #d5d1c9, #f2f2f2); }
.browser { display: flex; flex-direction: column; width: 239px; border-right: 1px solid #a0a0a0; border-bottom: 1px solid #a0a0a0; background: #f0f0f0; font: 11px/16px "Liberation Sans", sans-serif; color: #000; flex: none; }
.browser .caption { font: 12px "Noto Sans", sans-serif; }
.browser-body { display: flex; flex: 1; padding: 4px 4px 0 5px; background: #fff; border-bottom: 1px solid #ddd; }
.sunken { display: flex; flex-direction: column; flex: 1; min-width: 0; border: 1px solid #d8d8d8; border-top-color: #808080; border-left: 2px solid #808080; margin-bottom: 2px; }
.filter { display: flex; align-items: center; height: 29px; padding: 0 4px; background: #f0f0f0; border-bottom: 1px solid #a0a0a0; flex: none; }
.filter input { flex: 1; min-width: 0; height: 20px; margin: 0 4px 0 6px; padding: 0; border: 1px solid #707070; background: #fff; }
.filter button { width: 22px; height: 20px; justify-content: center; flex: none; }
.tree { flex: 1; background: #fff; }
.tree li { display: flex; align-items: center; height: 16px; padding-left: 3px; }
.tree span { margin-left: 3px; padding: 0 2px; }
.tree .l1 { padding-left: 7px; }
.tree .l2 { padding-left: 26px; }
.tree .blue { color: #0000c8; }
.tree .sel { background: #efefef; }
.box { width: 9px; height: 9px; margin-right: 6px; border: 1px solid #8a96a8; background: #fff; font: 9px/7px "Liberation Sans", sans-serif; text-align: center; color: #222; }
.stem { width: 11px; height: 16px; margin: 0 0 0 4px; border-left: 1px dotted #808080; background: linear-gradient(90deg, #999 50%, transparent 0) 0 8px / 2px 1px repeat-x; }
.tabs { display: flex; height: 22px; padding-left: 2px; font: 10px/14px "Liberation Mono", monospace; flex: none; }
.tabs button { gap: 6px; padding: 0 3px; border: 1px solid #d4d4d4; border-width: 1px 1px 0 0; margin-bottom: 2px; }
.tabs .sel { background: #fff; margin: 0; padding: 0 8px 0 6px; border-top: 0; }

.document { display: flex; flex-direction: column; flex: 1; min-width: 0; }
.doc-tabs { display: flex; align-items: center; height: 19px; padding: 2px 5px 0 11px; gap: 8px; flex: none; }
.doc-tab { height: 17px; padding: 0 7px 0 16px; margin-right: auto; background: #f2f2f2; clip-path: polygon(14px 0, 97% 0, 100% 3px, 100% 100%, 0 100%, 5px 12px); font-weight: bold; color: #000; }
.dm, .dx { width: 10px; height: 10px; }
.frame { flex: 1; min-height: 0; padding: 2px; border: 1px solid #808080; border-radius: 4px; background: #d4d0c8; }
.sheet { display: grid; grid-template: minmax(0, 1fr) 16px / minmax(0, 1fr) 16px; height: 100%; border: 2px solid #808080; background: #f0f0f0; }
.canvas { position: relative; overflow: hidden; background: #fff; }
.page-break { position: absolute; left: 1073px; top: 0; bottom: 0; border-left: 1px solid #000; }
.art { position: absolute; left: 524px; top: 395px; width: 280px; height: 294px; }
.entity { position: absolute; left: 605px; top: 418px; width: 173px; height: 219px; border: 1px solid #0a80bc; background: linear-gradient(120deg, #f8fbff 20%, #c4dffe 60%, #add2fa); }
.entity-name { height: 15px; border-bottom: 1px solid #0a80bc; }
.entity table { margin-top: 1px; border-spacing: 0; font: 8px/11px "DejaVu Sans Mono", monospace; color: #000; }
.entity td { height: 11px; padding: 0; }
.entity td:nth-child(1) { width: 72px; }
.entity td:nth-child(2) { width: 53px; }

/* scroll bars */
.vbar, .hbar { display: flex; align-items: center; background: #f0f0f0; color: #505050; }
.vbar { flex-direction: column; justify-content: space-between; padding: 5px 0; }
.hbar { justify-content: space-between; padding: 0 5px; }
.vbar svg, .hbar svg { width: 8px; height: 8px; }
.thumb { background: #cdcdcd; }
.vbar.inner .thumb { width: 15px; height: 19px; }
.hbar.inner .thumb { width: 87px; height: 15px; }
.vbar.outer { grid-area: 1 / 3 / 3 / 4; justify-content: flex-start; padding-bottom: 18px; }
.vbar.outer .thumb { width: 15px; height: 619px; margin: 22px 0 auto; }
.hbar.outer { grid-area: 2 / 1 / 3 / 3; gap: 4px; }
.hbar.outer .thumb { width: 924px; height: 15px; margin-right: auto; }

/* toolbox */
.toolbox { display: flex; flex-direction: column; width: 158px; border-left: 1px solid #a0a0a0; border-bottom: 1px solid #a0a0a0; flex: none; }
.toolbox .caption, .output .caption { gap: 5px; padding-right: 0; }
.toolbox-body { display: flex; flex-direction: column; flex: 1; padding-top: 2px; border-left: 2px solid #d4d0c8; background: linear-gradient(90deg, #eaf0f6, #fff); }
.views { display: flex; gap: 1px; height: 30px; padding: 2px 0 0 2px; background: linear-gradient(#fdfdfd, #d6d8da); }
.views button { width: 24px; height: 24px; justify-content: center; }
.group { gap: 5px; height: 22px; background: linear-gradient(90deg, #f2f2f2, #f2f2f200), linear-gradient(#fff, #d8d8d8); color: #222; }
.group.first { height: 21px; }
.group.ruled { border-top: 1px solid #b8b8b8; }
.group i { display: grid; place-items: center; width: 19px; height: 19px; border: 1px solid #444; border-radius: 50%; background: #fff; }
.group svg { width: 8px; height: 8px; }
.palette { display: grid; grid-template-columns: repeat(6, 26px); padding: 0 0 0 1px; }
.palette button { width: 24px; height: 26px; justify-content: center; }
.palette .on { height: 24px; }

/* output */
.output { display: flex; flex-direction: column; height: 49px; border-top: 1px solid #a0a0a0; overflow: hidden; flex: none; }
.log { padding-top: 13px; background: #fff; font: 11px/13px "Liberation Sans", "Noto Sans CJK SC", sans-serif; color: #000; white-space: nowrap; }
.log p { height: 13px; }

/* annotations laid over the window */
.marks { position: absolute; inset: 0; z-index: 10; pointer-events: none; }
.marks svg { width: 100%; height: 100%; }
.ring { position: absolute; border: 3px solid #ff2312; border-radius: 3px; }
.ring-tools { left: 414px; top: 0; width: 66px; height: 32px; }
.ring-exec { left: 432px; top: 270px; width: 334px; height: 33px; }
.ring-script { left: 809px; top: 264px; width: 282px; height: 35px; }
.step { position: absolute; font: 300 21px/24px "Noto Sans CJK SC", sans-serif; color: #ff2312; }
.step-1 { left: 259px; top: 103px; }
.step-2 { left: 297px; top: 237px; }
.step-3 { left: 1197px; top: 213px; }
.credit { position: absolute; right: 16px; bottom: 7px; font: 17px/20px "Liberation Sans", "Noto Sans CJK SC", sans-serif; color: #8a8a8a; text-shadow: 1px 1px 0 #fff; }
```
